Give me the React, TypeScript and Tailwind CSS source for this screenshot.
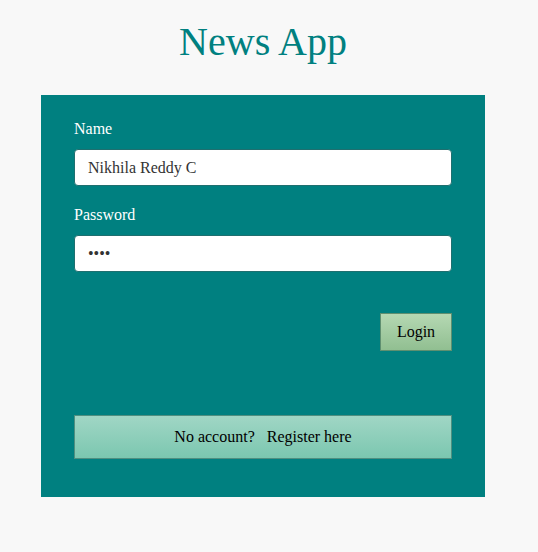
const serif = "font-['Liberation_Serif',serif]";

export default function App() {
  return (
    <div className={`min-h-[552px] w-full bg-[#f8f8f8] ${serif}`}>
      <div className="w-[444px] ml-[41px] flex flex-col items-stretch">
        <h1 className="mt-[19px] h-[46px] leading-[46px] text-center text-[40px] text-[#008080] font-['Liberation_Serif',serif]">
          News App
        </h1>
        <form className="mt-[30px] h-[402px] bg-[#008080] px-[33px] pt-[25px] flex flex-col">
          <label className="text-white text-[16px] leading-[18px] font-['Liberation_Serif',serif]">Name</label>
          <input
            type="text"
            defaultValue="Nikhila Reddy C"
            className="mt-[11px] h-[37px] rounded-[4px] border border-[#1f6f6f] bg-white px-[13px] text-[16px] text-[#333] outline-none font-['Liberation_Serif',serif]"
          />
          <label className="mt-[20px] text-white text-[16px] leading-[18px] font-['Liberation_Serif',serif]">Password</label>
          <input
            type="password"
            defaultValue="abcd"
            className="mt-[11px] h-[37px] rounded-[4px] border border-[#1f6f6f] bg-white px-[13px] text-[16px] text-[#333] outline-none font-['Liberation_Serif',serif]"
          />
          <div className="mt-[41px] flex justify-end">
            <button
              type="button"
              className="w-[72px] h-[38px] border border-[#5f8f70] bg-gradient-to-b from-[#b5d8b3] to-[#91bf91] text-[16px] text-black font-['Liberation_Serif',serif]"
            >
              Login
            </button>
          </div>
          <button
            type="button"
            className="mt-[64px] h-[44px] border border-[#4f8f80] bg-gradient-to-b from-[#a0d6c5] to-[#7bc7b0] text-[16px] text-black whitespace-pre font-['Liberation_Serif',serif]"
          >
            {"No account?   Register here"}
          </button>
        </form>
      </div>
    </div>
  );
}
